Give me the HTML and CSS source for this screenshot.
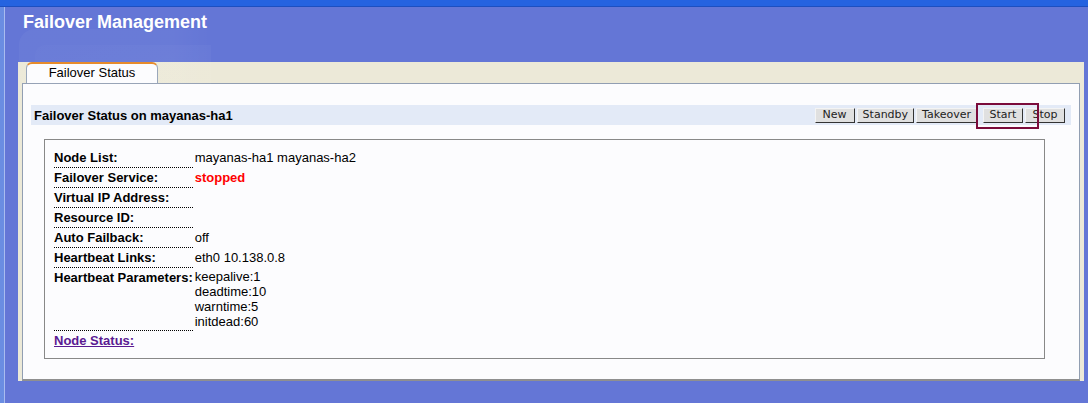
FILE: index.html
```html
<!DOCTYPE html>
<html>
<head>
<meta charset="utf-8">
<title>Failover Management</title>
<link rel="stylesheet" href="styles.css">
</head>
<body>
<div class="topbar"></div>
<div class="frame">
  <div class="strip"></div>
  <div class="main">
    <div class="header">
      <div class="watermark"><div class="watermark-inner"></div></div>
      <h1 class="title">Failover Management</h1>
    </div>
    <div class="panel">
      <div class="tabs">
        <div class="tab">Failover Status</div>
      </div>
      <div class="content">
        <div class="bar">
          <div class="bar-title">Failover Status on mayanas-ha1</div>
          <div class="buttons">
            <button class="btn">New</button>
            <button class="btn">Standby</button>
            <button class="btn">Takeover</button>
            <span class="start-wrap"><button class="btn">Start</button><span class="highlight"></span></span>
            <button class="btn">Stop</button>
          </div>
        </div>
        <div class="details">
          <table class="info">
            <tr><td class="lbl">Node List:</td><td class="val">mayanas-ha1 mayanas-ha2</td></tr>
            <tr><td class="lbl">Failover Service:</td><td class="val stopped">stopped</td></tr>
            <tr><td class="lbl">Virtual IP Address:</td><td class="val"></td></tr>
            <tr><td class="lbl">Resource ID:</td><td class="val"></td></tr>
            <tr><td class="lbl">Auto Failback:</td><td class="val">off</td></tr>
            <tr><td class="lbl">Heartbeat Links:</td><td class="val">eth0 10.138.0.8</td></tr>
            <tr><td class="lbl">Heartbeat Parameters:</td><td class="val multi">keepalive:1<br>deadtime:10<br>warntime:5<br>initdead:60</td></tr>
            <tr><td class="lbl last"><a class="link" href="#">Node Status:</a></td><td class="val"></td></tr>
          </table>
        </div>
      </div>
    </div>
  </div>
</div>
</body>
</html>
```

FILE: styles.css
```css
html, body {
  margin: 0;
  padding: 0;
}
body {
  background: #6476d6;
  font-family: "Liberation Sans", Arial, sans-serif;
  font-size: 13px;
  color: #000;
  height: 403px;
  overflow: hidden;
  display: flex;
  flex-direction: column;
}
.topbar {
  height: 6px;
  background: #2563e0;
  border-bottom: 1px solid #1d4fc0;
  flex: none;
}
.frame {
  display: flex;
  flex: 1;
}
.strip {
  width: 4px;
  background: #6a8de2;
  border-right: 1px solid #a9bcef;
  flex: none;
}
.main {
  flex: 1;
  display: flex;
  flex-direction: column;
}
.header {
  position: relative;
  height: 55px;
  padding-left: 18px;
  box-sizing: border-box;
}
.watermark {
  position: absolute;
  left: 14px;
  top: 22px;
  width: 192px;
  height: 60px;
  border-radius: 16px 0 0 0;
  background: linear-gradient(90deg, rgba(255,255,255,0.035) 80%, rgba(255,255,255,0));
}
.watermark-inner {
  position: absolute;
  left: 16px;
  top: 16px;
  right: 0;
  bottom: 0;
  border-radius: 10px 0 0 0;
  background: linear-gradient(160deg, rgba(255,255,255,0.01), rgba(255,255,255,0.04));
}
.title {
  position: relative;
  margin: 0;
  padding-top: 4px;
  font-size: 18px;
  font-weight: bold;
  color: #fff;
  line-height: 22px;
}
.panel {
  margin-left: 13px;
  margin-right: 4px;
  background: #ece9d8;
  padding: 0 4px 0 4px;
  height: 319px;
  box-sizing: border-box;
  display: flex;
  flex-direction: column;
}
.tabs {
  height: 21px;
  display: flex;
  padding-left: 4px;
}
.tab {
  position: relative;
  z-index: 1;
  width: 132px;
  height: 21px;
  box-sizing: border-box;
  background: #fcfcfe;
  border: 1px solid #9aa7bb;
  border-top: 2px solid #e68b2c;
  border-bottom: none;
  border-radius: 6px 6px 0 0;
  text-align: center;
  line-height: 18px;
  font-size: 13px;
  margin-bottom: -1px;
}
.content {
  flex: 1;
  background: #fcfcfe;
  border: 1px solid #919eb2;
  border-bottom: 2px solid #8f8f8f;
  padding: 21px 8px 0 8px;
}
.bar {
  height: 20px;
  background: #e3eaf7;
  display: flex;
  align-items: center;
  justify-content: space-between;
  padding: 0 6px 0 3px;
}
.bar-title {
  font-weight: bold;
  font-size: 13px;
}
.buttons {
  display: flex;
  align-items: center;
  gap: 2px;
}
.btn {
  font-family: "DejaVu Sans", sans-serif;
  font-size: 11px;
  color: #222;
  background: #e0e0e0;
  border: 1px solid;
  border-color: #f4f4f4 #333 #333 #f4f4f4;
  height: 15px;
  line-height: 12px;
  padding: 0 5px;
  min-width: 40px;
  margin: 0;
  border-radius: 0;
}
.start-wrap {
  position: relative;
  display: inline-flex;
  margin-left: 4px;
}
.highlight {
  position: absolute;
  left: -7px;
  top: -5px;
  width: 59px;
  height: 22px;
  border: 2px solid #7b0b3b;
}
.details {
  margin: 14px 26px 0 13px;
  border: 1px solid #888;
  height: 220px;
  box-sizing: border-box;
  padding: 8px 9px 0 9px;
}
.info {
  border-collapse: collapse;
}
.info td {
  padding: 2px 0;
  line-height: 15px;
  vertical-align: top;
}
.lbl {
  width: 137px;
  font-weight: bold;
  white-space: nowrap;
  border-bottom: 1px dotted #000;
}
.lbl.last {
  border-bottom: none;
}
.val {
  padding-left: 2px !important;
}
.multi {
  padding-top: 1px !important;
}
.stopped {
  color: #f00;
  font-weight: bold;
}
.link {
  color: #5a1a92;
  text-decoration: underline;
}
```
